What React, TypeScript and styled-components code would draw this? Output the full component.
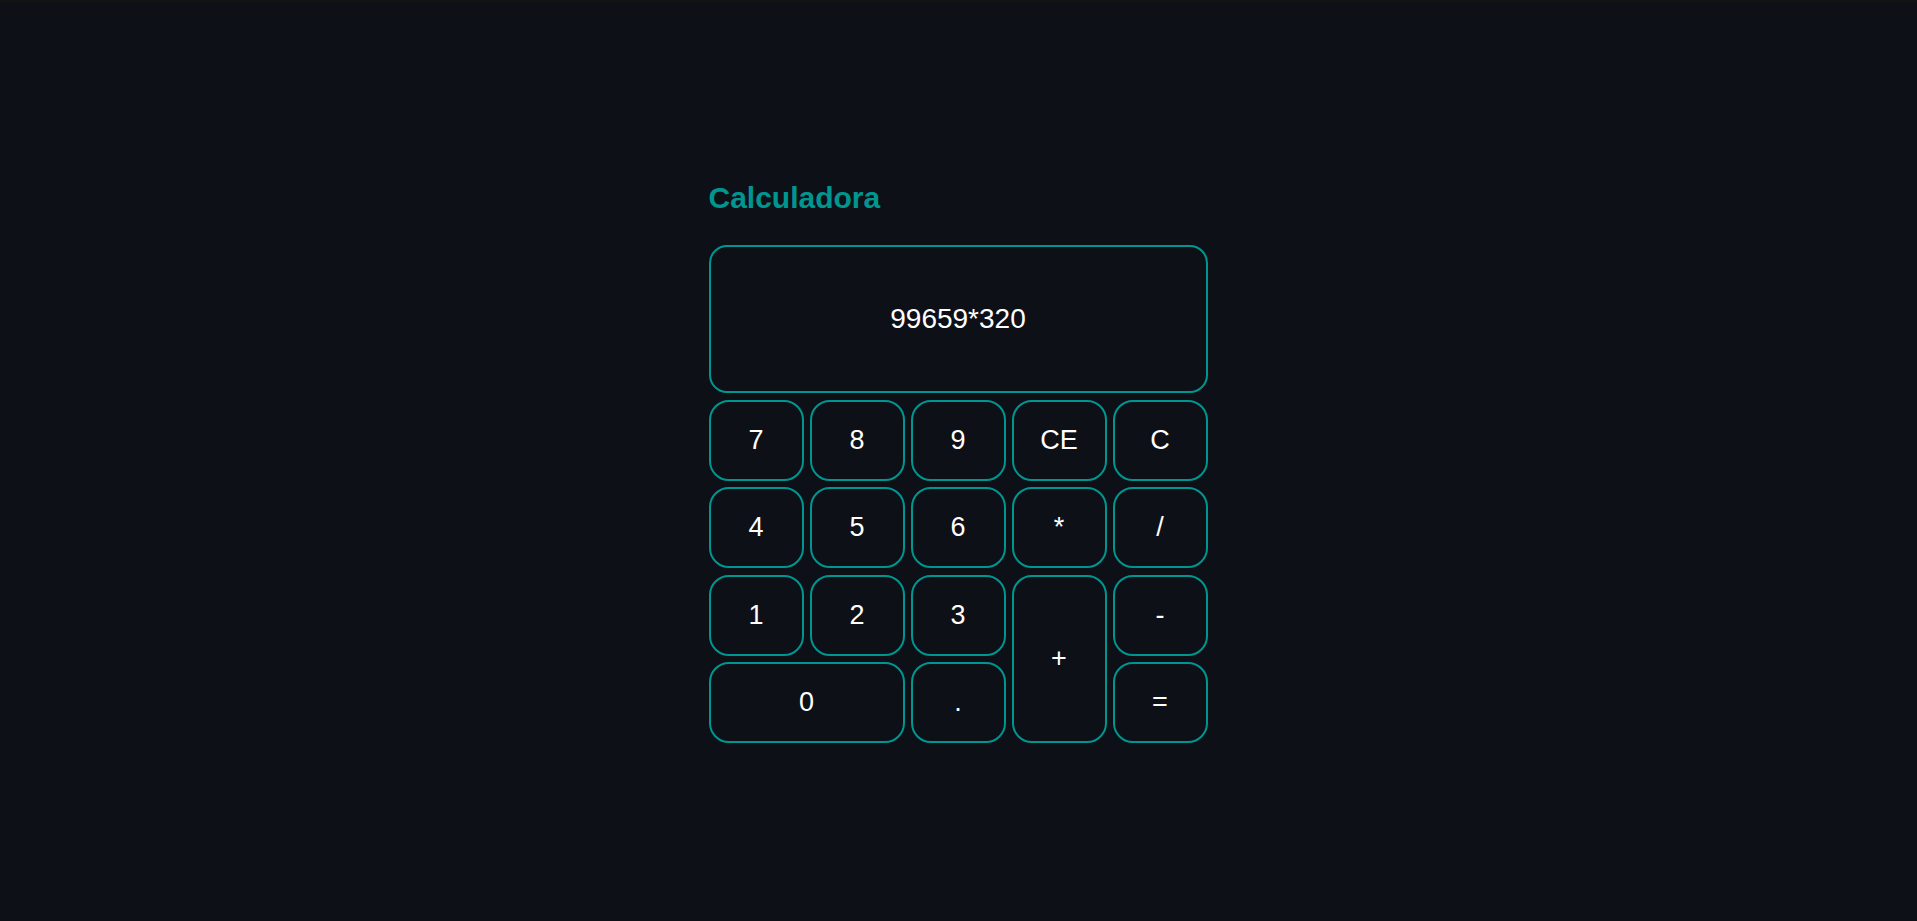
import React, { useState } from "react"
import styled, { createGlobalStyle } from "styled-components"

const GlobalStyle = createGlobalStyle`
  html, body {
    margin: 0;
    padding: 0;
    background: #0d1017;
    font-family: "Liberation Sans", Arial, sans-serif;
  }
`

type Key = {
  label: string
  col: string
  row: string
}

const keys: Key[] = [
  { label: "7", col: "1", row: "1" },
  { label: "8", col: "2", row: "1" },
  { label: "9", col: "3", row: "1" },
  { label: "CE", col: "4", row: "1" },
  { label: "C", col: "5", row: "1" },
  { label: "4", col: "1", row: "2" },
  { label: "5", col: "2", row: "2" },
  { label: "6", col: "3", row: "2" },
  { label: "*", col: "4", row: "2" },
  { label: "/", col: "5", row: "2" },
  { label: "1", col: "1", row: "3" },
  { label: "2", col: "2", row: "3" },
  { label: "3", col: "3", row: "3" },
  { label: "+", col: "4", row: "3 / span 2" },
  { label: "-", col: "5", row: "3" },
  { label: "0", col: "1 / span 2", row: "4" },
  { label: ".", col: "3", row: "4" },
  { label: "=", col: "5", row: "4" },
]

const App = () => {
  const [expr, setExpr] = useState("99659*320")

  const press = (label: string) => {
    if (label === "C") return setExpr("")
    if (label === "CE") return setExpr(expr.slice(0, -1))
    if (label === "=") {
      try {
        // eslint-disable-next-line no-new-func
        setExpr(String(Function(`return (${expr})`)()))
      } catch (e) {
        setExpr("Erro")
      }
      return
    }
    setExpr(expr + label)
  }

  return (
    <>
      <GlobalStyle />
      <TopStrip />
      <Page>
        <Calculator>
          <Title>Calculadora</Title>
          <Display>{expr}</Display>
          <Keypad>
            {keys.map((k) => (
              <KeyButton key={k.label} $col={k.col} $row={k.row} onClick={() => press(k.label)}>
                {k.label}
              </KeyButton>
            ))}
          </Keypad>
        </Calculator>
      </Page>
    </>
  )
}

export default App

const TopStrip = styled.div`
  height: 3px;
  background: #111214;
`

const Page = styled.main`
  display: flex;
  justify-content: center;
  padding-top: 180px;
  min-height: 918px;
  box-sizing: border-box;
`

const Calculator = styled.section`
  width: 499px;
  margin-right: 1px;
  display: flex;
  flex-direction: column;
`

const Title = styled.h2`
  margin: 0 0 32px 0;
  font-size: 30px;
  font-weight: bold;
  line-height: 30px;
  color: #009690;
`

const Display = styled.div`
  height: 148px;
  box-sizing: border-box;
  border: 2px solid #009690;
  border-radius: 18px;
  display: flex;
  align-items: center;
  justify-content: center;
  color: #ffffff;
  font-size: 28px;
  margin-bottom: 6.5px;
`

const Keypad = styled.div`
  display: grid;
  grid-template-columns: repeat(5, 1fr);
  grid-auto-rows: 81px;
  column-gap: 6px;
  row-gap: 6.5px;
`

const KeyButton = styled.button<{ $col: string; $row: string }>`
  grid-column: ${(p) => p.$col};
  grid-row: ${(p) => p.$row};
  background: transparent;
  border: 2px solid #009690;
  border-radius: 20px;
  color: #ffffff;
  font-family: "Liberation Sans", Arial, sans-serif;
  font-size: 27px;
  cursor: pointer;
  padding: 0;
`
